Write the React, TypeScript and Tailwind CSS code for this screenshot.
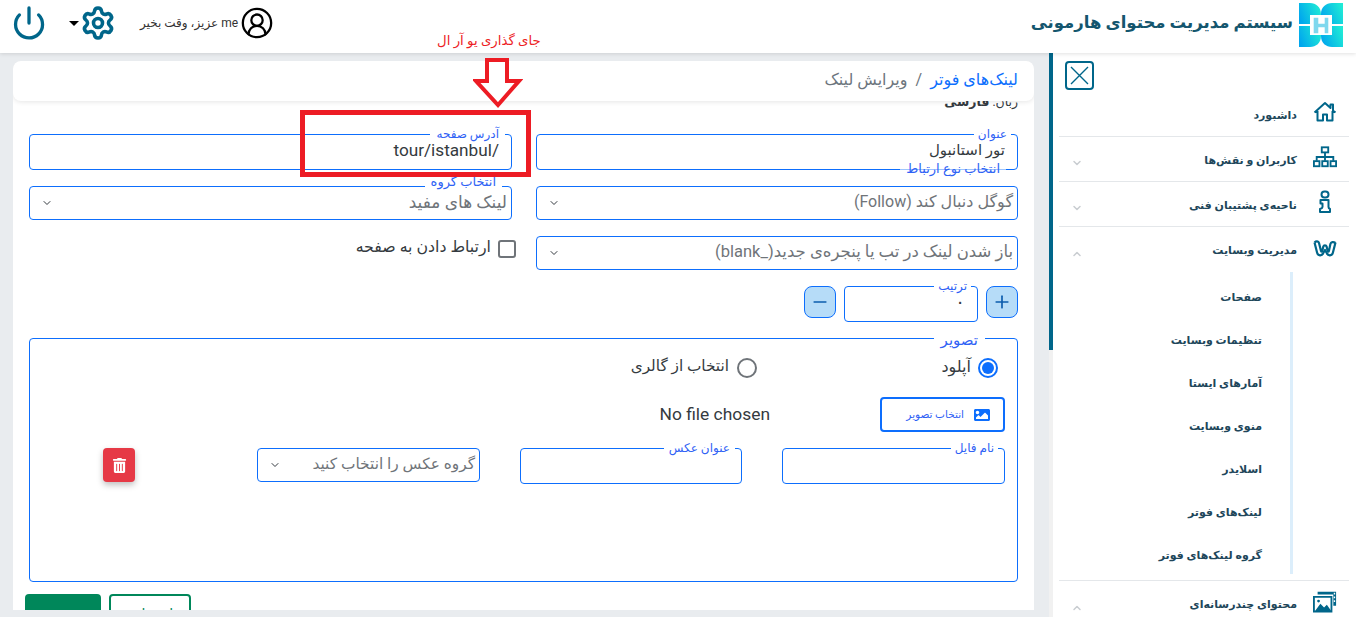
import React from "react";
import { Power, Settings, CircleUserRound, ChevronDown, ChevronUp, Plus, Minus } from "lucide-react";
import { FaImage, FaTrashAlt } from "react-icons/fa";

const Logo = () => (
  <svg width="44" height="44" viewBox="0 0 44 44">
    <defs>
      <linearGradient id="g" x1="0" y1="0.7" x2="1" y2="0.3">
        <stop offset="0" stopColor="#00a6ee" />
        <stop offset="1" stopColor="#1fead6" />
      </linearGradient>
    </defs>
    <g fill="url(#g)">
      <path d="M0 0h11c6 0 11 4 11 11v1H11v9H0z" />
      <path d="M44 0H33c-6 0-11 4-11 11v1h11v9h11z" />
      <path d="M0 44h11c6 0 11-4 11-11v-1H11v-9H0z" />
      <path d="M44 44H33c-6 0-11-4-11-11v-1h11v-9h11z" />
    </g>
    <path d="M12 12h20v20H12z" fill="#ffffff" opacity="0.35" />
    <path d="M14 14h6v6h5v-6h5v17h-5v-6h-5v6h-6z" fill="#7fd8ee" stroke="#ffffff" strokeWidth="1.4" />
  </svg>
);

const HomeIcon = () => (
  <svg width="24" height="24" viewBox="0 0 24 24" fill="none" stroke="#00668a" strokeWidth="2" strokeLinejoin="round">
    <path d="M1.500 12.500L12 3l5.500 5V4.500h2.500v6l2.500 2M4.500 11v9.500h5.500v-6h4v6h5.500V11" />
  </svg>
);

const DiagramIcon = () => (
  <svg width="26" height="24" viewBox="0 0 26 24" fill="none" stroke="#00668a" strokeWidth="2">
    <rect x="9.500" y="1.500" width="7" height="5.500" />
    <path d="M13 7v5M4 16v-4h18v4M13 12v4" />
    <rect x="1" y="16.500" width="6" height="5.500" />
    <rect x="10" y="16.500" width="6" height="5.500" />
    <rect x="19" y="16.500" width="6" height="5.500" />
  </svg>
);

const InfoIcon = () => (
  <svg width="24" height="24" viewBox="0 0 24 24" fill="none" stroke="#00668a" strokeWidth="2" strokeLinejoin="round">
    <rect x="8.500" y="1.500" width="7" height="6" rx="3" />
    <path d="M7.500 10h8v7c0 1 .5 1.500 1.500 2v3H7v-3c1.500-.5 2.500-1 2.500-2v-3.500h-2z" />
  </svg>
);

const WIcon = () => (
  <svg width="24" height="24" viewBox="0 0 24 24" fill="none" stroke="#00668a" strokeWidth="2.200" strokeLinejoin="round">
    <path d="M1.500 6.500c1.500-1.500 4-1.500 4.500.5l2 8c.3 1 1 1 1.300 0l1-4.500c.4-1.500 2.900-1.500 3.300 0l1 4.500c.3 1 1 1 1.300 0l1.500-7c.5-2 3-2.500 5-1" />
    <path d="M1.500 6.500l2.700 10.500c.8 3 4.800 3 5.800.5L12 14l2 3.500c1 2.500 5 2.500 5.800-.5l2.700-10.500" />
  </svg>
);

const MediaIcon = () => (
  <svg width="26" height="24" viewBox="0 0 26 24">
    <path d="M1 6.500h19v16H1z" fill="none" stroke="#00668a" strokeWidth="2" />
    <path d="M2 22l6-8 4 4 3-3 5 7z" fill="#00668a" />
    <circle cx="6" cy="11" r="1.500" fill="#00668a" />
    <path d="M5 1h20v15h-3V4H5z" fill="#00668a" />
    <path d="M22.500 2h1.500v2h-1.500zM22.500 6h1.500v2h-1.500zM22.500 10h1.500v2h-1.500z" fill="#ffffff" />
  </svg>
);

const Legend = ({ text, className }: { text: string; className: string }) => (
  <span className={"absolute bg-white px-[6px] text-[12px] leading-[14px] text-[#2f62f5] whitespace-nowrap " + className}>{text}</span>
);

const Field = ({ label, value, className, legendClass, valueClass = "text-[15px]" }: { label: string; value?: string; className: string; legendClass: string; valueClass?: string }) => (
  <div className={"relative h-[36px] rounded border border-[#0d6efd] bg-white " + className}>
    <Legend text={label} className={legendClass} />
    {value && <div className={"absolute right-[12px] top-[5px] leading-[20px] text-[#343a40] " + valueClass}>{value}</div>}
  </div>
);

const Select = ({ value, className, textClass = "text-[16px]" }: { value: string; className: string; textClass?: string }) => (
  <div className={"flex h-[34px] items-center justify-between rounded border border-[#0d6efd] bg-white pl-[11px] pr-[4px] " + className}>
    <span className={"pb-[2px] leading-[20px] text-[#6f7479] whitespace-nowrap " + textClass}>{value}</span>
    <ChevronDown size={12} strokeWidth={2} className="text-[#343a40]" />
  </div>
);

const NavRow = ({ label, icon, chevron, line = true }: { label: string; icon: React.ReactNode; chevron?: "up" | "down"; line?: boolean }) => (
  <div className={"flex h-[45px] items-center pl-[12px] pr-[12px] " + (line ? "border-b border-[#e4e7ea]" : "")}>
    <span className="-mt-[4px] flex w-[24px] shrink-0 justify-center">{icon}</span>
    <span className="mr-[16px] pt-[4px] text-[11px] font-bold text-[#20465a]">{label}</span>
    <span className="mr-auto mt-[8px] text-[#c9cdd1]">
      {chevron === "down" && <ChevronDown size={12} strokeWidth={3} />}
      {chevron === "up" && <ChevronUp size={12} strokeWidth={3} />}
    </span>
  </div>
);

const subItems = ["صفحات", "تنظیمات وبسایت", "آمارهای ایستا", "منوی وبسایت", "اسلایدر", "لینک‌های فوتر", "گروه لینک‌های فوتر"];

export default function App() {
  return (
    <div
      className="relative flex h-[617px] w-[1356px] flex-col overflow-hidden bg-[#e9ecef]"
      style={{ fontFamily: 'Roboto, "DejaVu Sans", sans-serif' }}
    >
      <header className="z-10 flex h-[53px] shrink-0 items-center justify-between bg-white pl-[11px] pr-[13px] shadow-[0_1px_4px_rgba(0,0,0,0.12)]">
        <div className="flex items-center pb-[7px]">
          <Power size={36} strokeWidth={2.2} className="text-[#00668a]" />
          <span className="ml-[22px] h-0 w-0 border-x-[5px] border-t-[5px] border-x-transparent border-t-black" />
          <Settings size={36} strokeWidth={2.4} className="ml-[1px] text-[#00668a]" />
          <span dir="rtl" className="ml-[24px] text-[12px] text-[#333]">me عزیز، وقت بخیر</span>
          <CircleUserRound size={34} strokeWidth={1.6} className="ml-[2px] text-black" />
        </div>
        <div dir="rtl" className="flex items-center gap-[6px] pb-[3px]">
          <Logo />
          <span className="pb-[3px] text-[16.500px] font-bold text-[#14566e] whitespace-nowrap">سیستم مدیریت محتوای هارمونی</span>
        </div>
      </header>

      <div className="flex min-h-0 flex-1">
        <main className="flex w-[1049px] shrink-0 pb-[7px] pl-[13px] pr-[15px] pt-[8px]">
          <div dir="rtl" className="relative flex-1 overflow-hidden rounded-t-lg bg-white">
            <div className="absolute inset-x-0 top-0 z-10 flex h-[40px] items-center gap-[8px] rounded-lg bg-white pb-[3px] pr-[16px] text-[16px] shadow-[0_1px_5px_rgba(0,0,0,0.1)]">
              <span className="text-[#0d6efd]">لینک‌های فوتر</span>
              <span className="text-[#6c757d]">/</span>
              <span className="text-[#6c757d]">ویرایش لینک</span>
            </div>

            <div className="px-[16px] pt-[32px]">
              <div className="h-[41px] text-[12.500px] text-[#343a40]">
                زبان: <b>فارسی</b>
              </div>

              <div className="grid grid-cols-[482px_483px] gap-x-[24px] gap-y-[16px]">
                <Field label="عنوان" value="تور استانبول" className="" legendClass="right-[6px] -top-[8px] !px-[4px]" />
                <Field label="آدرس صفحه" value="/tour/istanbul" className="" valueClass="text-[17.200px]" legendClass="right-[6px] -top-[8px]" />
                <div className="relative">
                  <Legend text="انتخاب نوع ارتباط" className="right-[12px] -top-[24px] !bg-white/60 !text-[13px]" />
                  <Select value="گوگل دنبال کند (Follow)" className="" />
                </div>
                <div className="relative">
                  <Legend text="انتخاب گروه" className="right-[10px] -top-[11px] !text-[13px]" />
                  <Select value="لینک های مفید" className="" textClass="text-[17px]" />
                </div>
                <Select value="باز شدن لینک در تب یا پنجره‌ی جدید(_blank)" className="" textClass="text-[16.500px]" />
                <div className="-mr-[4px] flex h-[34px] items-start gap-[7px]">
                  <span className="mt-[4px] h-[18px] w-[18px] rounded-[3px] border-2 border-[#6f7479] bg-white" />
                  <span className="text-[15.800px] leading-[22px] text-[#343a40]">ارتباط دادن به صفحه</span>
                </div>
              </div>

              <div className="mt-[16px] flex items-start gap-[8px]">
                <button className="flex h-[32px] w-[32px] items-center justify-center rounded-lg border border-[#0d6efd] bg-[#b6dcf8] text-[#0b5cad]">
                  <Plus size={20} strokeWidth={2} />
                </button>
                <Field label="ترتیب" value="۰" className="w-[134px]" valueClass="!text-[18px]" legendClass="right-[6px] -top-[8px] !px-[4px]" />
                <button className="flex h-[32px] w-[32px] items-center justify-center rounded-lg border border-[#0d6efd] bg-[#b6dcf8] text-[#0b5cad]">
                  <Minus size={20} strokeWidth={2} />
                </button>
              </div>

              <div className="relative mt-[16px] h-[244px] rounded border border-[#0d6efd] pl-[13px] pr-[12px] pt-[19px]">
                <Legend text="تصویر" className="right-[32px] -top-[7px] !text-[15px] !leading-[16px] !px-[7px]" />

                <div className="flex h-[20px] items-center pr-[7px]">
                  <label className="flex w-[241px] items-center gap-[7px]">
                    <span className="flex h-[20px] w-[20px] items-center justify-center rounded-full border-2 border-[#0d6efd]">
                      <span className="h-[12px] w-[12px] rounded-full bg-[#0d6efd]" />
                    </span>
                    <span className="pb-[3px] text-[16px] text-[#343a40]">آپلود</span>
                  </label>
                  <label className="flex items-center gap-[8px]">
                    <span className="h-[20px] w-[20px] rounded-full border-2 border-[#6f7479]" />
                    <span className="pb-[3px] text-[15.300px] text-[#343a40]">انتخاب از گالری</span>
                  </label>
                </div>

                <div className="mt-[19px] flex items-center gap-[110px]">
                  <button className="flex h-[35px] w-[125px] items-center gap-[10px] rounded border-2 border-[#0d6efd] pr-[13px]">
                    <FaImage size={16} className="text-[#0d6efd]" />
                    <span className="text-[10.500px] text-[#2f62f5]">انتخاب تصویر</span>
                  </button>
                  <span dir="ltr" className="text-[17.400px] text-[#343a40]">No file chosen</span>
                </div>

                <div className="mt-[16px] flex items-start">
                  <Field label="نام فایل" className="w-[223px]" legendClass="right-[6px] -top-[8px] !px-[4px]" />
                  <Field label="عنوان عکس" className="mr-[40px] w-[222px]" legendClass="right-[6px] -top-[8px] !px-[5px]" />
                  <Select value="گروه عکس را انتخاب کنید" className="mr-[40px] w-[223px]" textClass="text-[15.400px]" />
                  <button className="mr-[122px] flex h-[34px] w-[32px] items-center justify-center rounded bg-[#e63946] text-white shadow-[0_3px_6px_rgba(0,0,0,0.25)]">
                    <FaTrashAlt size={15} />
                  </button>
                </div>
              </div>

              <div className="-ml-[4px] mt-[12px] flex justify-end gap-[8px]">
                <button className="h-[40px] w-[82px] rounded border-2 border-[#00875a] bg-white text-[14px] text-[#00875a]">انصراف</button>
                <button className="h-[40px] w-[76px] rounded bg-[#00875a] text-[14px] text-white">ذخیره</button>
              </div>
            </div>
          </div>
        </main>

        <aside className="flex w-[307px] shrink-0">
          <div className="w-[4px] shrink-0 bg-[#f1f1f1]">
            <div className="h-[297px] bg-[#00668a]" />
          </div>
          <div dir="rtl" className="flex-1 overflow-hidden bg-white pl-[6px] pr-[7px]">
            <div className="flex h-[39px] items-start justify-end pl-[6px] pt-[8px]">
              <span className="flex h-[29px] w-[29px] items-center justify-center rounded-[4px] border-2 border-[#00668a]">
                <svg width="19" height="19" viewBox="0 0 19 19" stroke="#00668a" strokeWidth="1.4">
                  <path d="M1 1l17 17M18 1L1 18" />
                </svg>
              </span>
            </div>
            <NavRow label="داشبورد" icon={<HomeIcon />} />
            <NavRow label="کاربران و نقش‌ها" chevron="down" icon={<DiagramIcon />} />
            <NavRow label="ناحیه‌ی پشتیبان فنی" chevron="down" icon={<InfoIcon />} />
            <NavRow label="مدیریت وبسایت" chevron="up" line={false} icon={<WIcon />} />
            <div className="mr-[56px] h-[302px] w-fit min-w-[200px] border-r-[3px] border-[#dceefb] pr-[28px] pt-[5px]">
              {subItems.map((s) => (
                <div key={s} className="flex h-[43px] items-center text-[11px] font-bold text-[#20465a]">{s}</div>
              ))}
            </div>
            <div className="mt-[6px] border-t border-[#e4e7ea]">
              <NavRow label="محتوای چندرسانه‌ای" chevron="up" line={false} icon={<MediaIcon />} />
            </div>
          </div>
        </aside>
      </div>

      <div className="pointer-events-none absolute inset-0 z-20">
        <span dir="rtl" className="absolute left-[437px] top-[33px] text-[13.300px] leading-[16px] text-[#ed1c24]">جای گذاری یو آر ال</span>
        <svg className="absolute left-[473px] top-[58px]" width="50" height="52" viewBox="0 0 50 52">
          <path d="M14 2h20v21h12L25 47 3 23h11z" fill="#ffffff" stroke="#ed1c24" strokeWidth="4" />
        </svg>
        <div className="absolute left-[300px] top-[110px] h-[67px] w-[231px] border-[5px] border-[#ed1c24]" />
      </div>
    </div>
  );
}
